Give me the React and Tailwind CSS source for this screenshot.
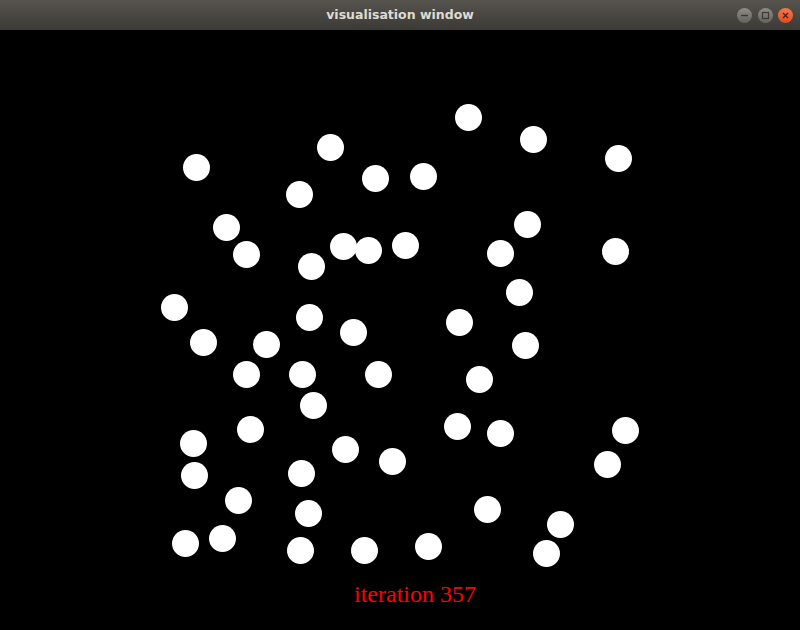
const dots = [
    [468, 117], [533, 139], [618, 158], [330, 147], [196, 167],
    [375, 178], [423, 176], [299, 194], [226, 227], [527, 224],
    [246, 254], [343, 246], [368, 250], [405, 245], [500, 253],
    [615, 251], [311, 266], [519, 292], [174, 307], [309, 317],
    [353, 332], [459, 322], [203, 342], [266, 344], [525, 345],
    [246, 374], [302, 374], [378, 374], [479, 379], [313, 405],
    [457, 426], [500, 433], [625, 430], [193, 443], [250, 429],
    [345, 449], [392, 461], [607, 464], [194, 475], [301, 473],
    [238, 500], [487, 509], [308, 513], [560, 524], [185, 543],
    [222, 538], [300, 550], [364, 550], [428, 546], [546, 553],
];

const TitleButton = ({ close, children }) => (
    <div
        className={`w-[15px] h-[15px] rounded-full flex items-center justify-center ${
            close
                ? "bg-linear-to-b from-[#f47a4c] to-[#df4a1f]"
                : "bg-linear-to-b from-[#8e8c86] to-[#65635e]"
        }`}
    >
        {children}
    </div>
);

const App = () => {
    return (
        <div className="w-[800px] h-[630px] flex flex-col bg-black overflow-hidden">
            {/* title bar */}
            <div className="h-[30px] shrink-0 grid grid-cols-[1fr_auto_1fr] items-center bg-linear-to-b from-[#57544e] to-[#3b3a36]">
                <div />
                <span className="font-['DejaVu_Sans',sans-serif] font-bold text-[12.5px] text-[#dfdbd2]">
                    visualisation window
                </span>
                <div className="flex justify-end items-center gap-[5.5px] pr-[7px]">
                    <TitleButton>
                        <svg width="9" height="9" viewBox="0 0 9 9">
                            <path d="M1 4.5h7" stroke="#3a3935" strokeWidth="1.4" />
                        </svg>
                    </TitleButton>
                    <TitleButton>
                        <svg width="9" height="9" viewBox="0 0 9 9">
                            <rect x="1.5" y="1.5" width="6" height="6" fill="none" stroke="#3a3935" strokeWidth="1.2" />
                        </svg>
                    </TitleButton>
                    <TitleButton close>
                        <svg width="9" height="9" viewBox="0 0 9 9">
                            <path d="M2 2l5 5M7 2l-5 5" stroke="#4a2418" strokeWidth="1.3" />
                        </svg>
                    </TitleButton>
                </div>
            </div>

            {/* canvas */}
            <div className="relative flex-1">
                {dots.map(([x, y], index) => (
                    <div
                        key={index}
                        className="absolute w-[27px] h-[27px] rounded-full bg-white"
                        style={{ left: x - 13.5, top: y - 30 - 13.5 }}
                    />
                ))}
                <span className="absolute left-[354px] top-[552px] leading-[24px] font-['Liberation_Serif',serif] text-[24px] text-[#ff0000]">
                    iteration 357
                </span>
            </div>
        </div>
    );
};

export default App;
